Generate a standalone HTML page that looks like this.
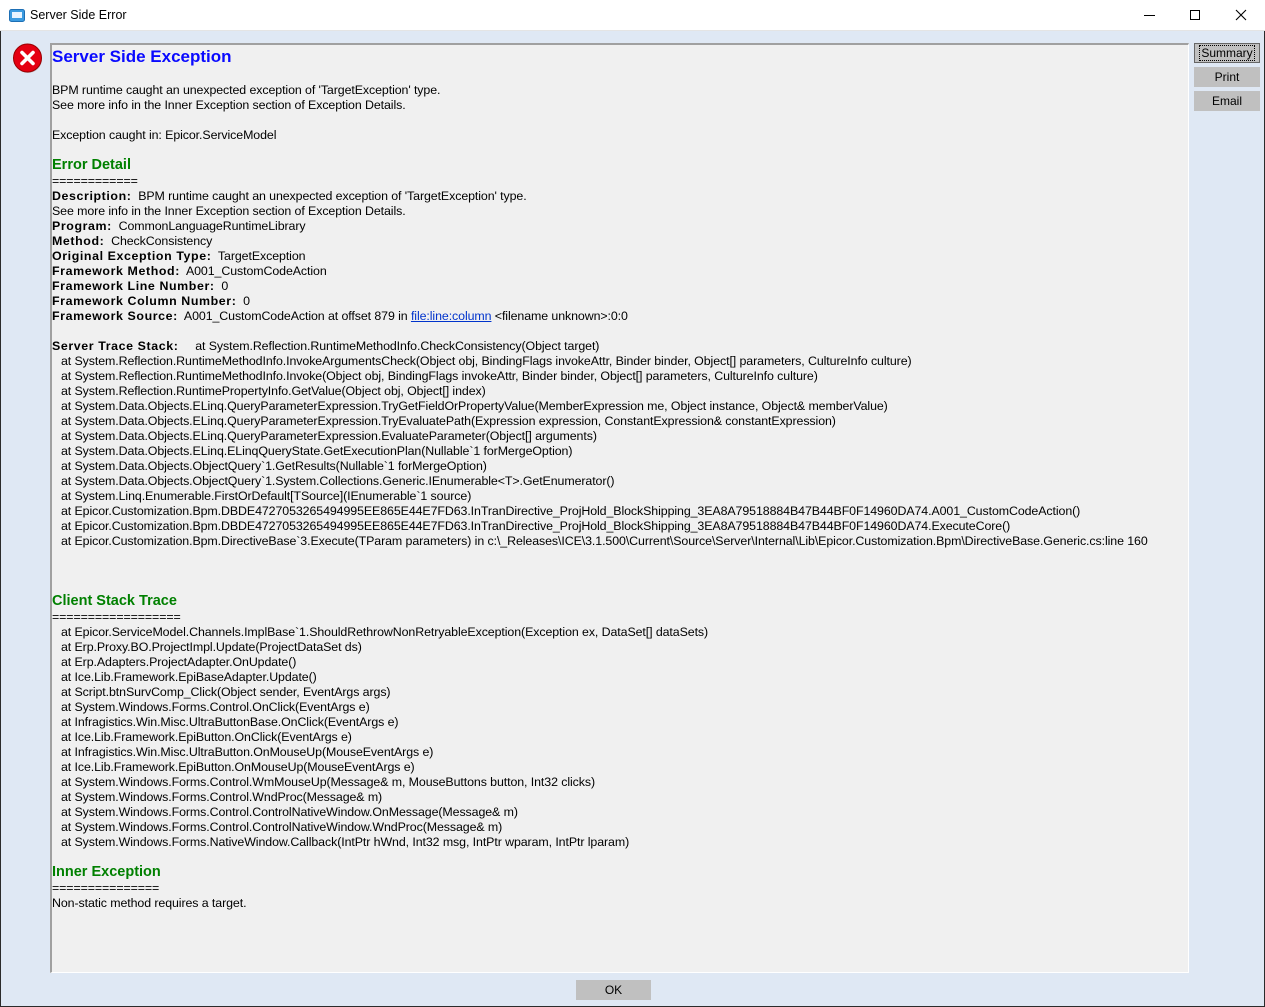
<!DOCTYPE html>
<html><head><meta charset="utf-8"><style>
*{margin:0;padding:0;box-sizing:border-box}
body{width:1265px;height:1007px;overflow:hidden;background:#dfe8f4;font-family:"Liberation Sans",Arial,sans-serif;position:relative}
.win{position:absolute;left:0;top:0;width:1265px;height:1007px;border:1px solid #2b2b2b;border-top:none}
.title{position:absolute;left:0;top:0;width:1265px;height:31px;background:#fff;border-bottom:1px solid #e4e4e4}
.title span{position:absolute;left:30px;top:8px;font-size:12.5px;color:#000}
.panel{position:absolute;left:50px;top:43px;width:1139px;height:930px;background:#f0f0f0;border-top:2px solid #a0a0a0;border-left:2px solid #a0a0a0;border-right:1px solid #fff;border-bottom:1px solid #fff}
.l{position:absolute;left:52px;height:15px;line-height:15px;font-size:12.4px;letter-spacing:-0.09px;color:#000;white-space:pre}
.i{left:61px}
.h{font-weight:bold;color:#008000;font-size:14.5px;line-height:17px;height:17px;letter-spacing:0}
b{font-weight:bold;letter-spacing:0.6px}
a{color:#0033cc;text-decoration:underline}
.btn{position:absolute;left:1194px;width:66px;height:20px;background:#c0c0c0;font-size:12px;text-align:center;line-height:20px;color:#000}
</style></head><body>
<div class="win"></div>
<div class="title">
<svg style="position:absolute;left:9px;top:9px" width="16" height="13" viewBox="0 0 16 13"><rect x="0.5" y="0.5" width="15" height="12" rx="2" fill="#3b9be0" stroke="#1d6fb5"/><rect x="3" y="3" width="10" height="6" fill="#e8f4ff"/></svg>
<span>Server Side Error</span>
<div style="position:absolute;left:1144px;top:15px;width:11px;height:1px;background:#000"></div>
<div style="position:absolute;left:1190px;top:10px;width:10px;height:10px;border:1px solid #000"></div>
<svg style="position:absolute;left:1235px;top:9px" width="12" height="12"><path d="M1 1L11 11M11 1L1 11" stroke="#000" stroke-width="1.1"/></svg>
</div>
<svg style="position:absolute;left:12px;top:42px" width="32" height="32" viewBox="0 0 32 32"><circle cx="16" cy="17" r="14" fill="#888" opacity=".5"/><circle cx="15.5" cy="16" r="14" fill="#e50012" stroke="#9a0000" stroke-width="1"/><path d="M10 10.5L21 21.5M21 10.5L10 21.5" stroke="#fff" stroke-width="3.6" stroke-linecap="round"/></svg>
<div class="panel"></div>
<div class="btn" style="top:43px;border:1px solid #666;line-height:18px"><span style="outline:1px dotted #000;padding:0 1px">Summary</span></div>
<div class="btn" style="top:67px">Print</div>
<div class="btn" style="top:91px">Email</div>
<div class="btn" style="left:576px;top:980px;width:75px;height:20px">OK</div>

<div class="l" style="top:46px;height:22px;line-height:22px;font-size:17px;font-weight:bold;color:#0a0aff;letter-spacing:0">Server Side Exception</div>
<div class="l" style="top:83px">BPM runtime caught an unexpected exception of 'TargetException' type.</div>
<div class="l" style="top:98px">See more info in the Inner Exception section of Exception Details.</div>
<div class="l" style="top:128px">Exception caught in: Epicor.ServiceModel</div>
<div class="l h" style="top:157px">Error Detail</div>
<div class="l" style="top:174px">============</div>
<div class="l" style="top:189px"><b>Description:</b>  BPM runtime caught an unexpected exception of 'TargetException' type.</div>
<div class="l" style="top:204px">See more info in the Inner Exception section of Exception Details.</div>
<div class="l" style="top:219px"><b>Program:</b>  CommonLanguageRuntimeLibrary</div>
<div class="l" style="top:234px"><b>Method:</b>  CheckConsistency</div>
<div class="l" style="top:249px"><b>Original Exception Type:</b>  TargetException</div>
<div class="l" style="top:264px"><b>Framework Method:</b>  A001_CustomCodeAction</div>
<div class="l" style="top:279px"><b>Framework Line Number:</b>  0</div>
<div class="l" style="top:294px"><b>Framework Column Number:</b>  0</div>
<div class="l" style="top:309px"><b>Framework Source:</b>  A001_CustomCodeAction at offset 879 in <a>file:line:column</a> &lt;filename unknown&gt;:0:0</div>
<div class="l" style="top:339px"><b>Server Trace Stack:</b>     at System.Reflection.RuntimeMethodInfo.CheckConsistency(Object target)</div>
<div class="l i" style="top:354px">at System.Reflection.RuntimeMethodInfo.InvokeArgumentsCheck(Object obj, BindingFlags invokeAttr, Binder binder, Object[] parameters, CultureInfo culture)</div>
<div class="l i" style="top:369px">at System.Reflection.RuntimeMethodInfo.Invoke(Object obj, BindingFlags invokeAttr, Binder binder, Object[] parameters, CultureInfo culture)</div>
<div class="l i" style="top:384px">at System.Reflection.RuntimePropertyInfo.GetValue(Object obj, Object[] index)</div>
<div class="l i" style="top:399px">at System.Data.Objects.ELinq.QueryParameterExpression.TryGetFieldOrPropertyValue(MemberExpression me, Object instance, Object&amp; memberValue)</div>
<div class="l i" style="top:414px">at System.Data.Objects.ELinq.QueryParameterExpression.TryEvaluatePath(Expression expression, ConstantExpression&amp; constantExpression)</div>
<div class="l i" style="top:429px">at System.Data.Objects.ELinq.QueryParameterExpression.EvaluateParameter(Object[] arguments)</div>
<div class="l i" style="top:444px">at System.Data.Objects.ELinq.ELinqQueryState.GetExecutionPlan(Nullable`1 forMergeOption)</div>
<div class="l i" style="top:459px">at System.Data.Objects.ObjectQuery`1.GetResults(Nullable`1 forMergeOption)</div>
<div class="l i" style="top:474px">at System.Data.Objects.ObjectQuery`1.System.Collections.Generic.IEnumerable&lt;T&gt;.GetEnumerator()</div>
<div class="l i" style="top:489px">at System.Linq.Enumerable.FirstOrDefault[TSource](IEnumerable`1 source)</div>
<div class="l i" style="top:504px">at Epicor.Customization.Bpm.DBDE4727053265494995EE865E44E7FD63.InTranDirective_ProjHold_BlockShipping_3EA8A79518884B47B44BF0F14960DA74.A001_CustomCodeAction()</div>
<div class="l i" style="top:519px">at Epicor.Customization.Bpm.DBDE4727053265494995EE865E44E7FD63.InTranDirective_ProjHold_BlockShipping_3EA8A79518884B47B44BF0F14960DA74.ExecuteCore()</div>
<div class="l i" style="top:534px">at Epicor.Customization.Bpm.DirectiveBase`3.Execute(TParam parameters) in c:\_Releases\ICE\3.1.500\Current\Source\Server\Internal\Lib\Epicor.Customization.Bpm\DirectiveBase.Generic.cs:line 160</div>
<div class="l h" style="top:593px">Client Stack Trace</div>
<div class="l" style="top:610px">==================</div>
<div class="l i" style="top:625px">at Epicor.ServiceModel.Channels.ImplBase`1.ShouldRethrowNonRetryableException(Exception ex, DataSet[] dataSets)</div>
<div class="l i" style="top:640px">at Erp.Proxy.BO.ProjectImpl.Update(ProjectDataSet ds)</div>
<div class="l i" style="top:655px">at Erp.Adapters.ProjectAdapter.OnUpdate()</div>
<div class="l i" style="top:670px">at Ice.Lib.Framework.EpiBaseAdapter.Update()</div>
<div class="l i" style="top:685px">at Script.btnSurvComp_Click(Object sender, EventArgs args)</div>
<div class="l i" style="top:700px">at System.Windows.Forms.Control.OnClick(EventArgs e)</div>
<div class="l i" style="top:715px">at Infragistics.Win.Misc.UltraButtonBase.OnClick(EventArgs e)</div>
<div class="l i" style="top:730px">at Ice.Lib.Framework.EpiButton.OnClick(EventArgs e)</div>
<div class="l i" style="top:745px">at Infragistics.Win.Misc.UltraButton.OnMouseUp(MouseEventArgs e)</div>
<div class="l i" style="top:760px">at Ice.Lib.Framework.EpiButton.OnMouseUp(MouseEventArgs e)</div>
<div class="l i" style="top:775px">at System.Windows.Forms.Control.WmMouseUp(Message&amp; m, MouseButtons button, Int32 clicks)</div>
<div class="l i" style="top:790px">at System.Windows.Forms.Control.WndProc(Message&amp; m)</div>
<div class="l i" style="top:805px">at System.Windows.Forms.Control.ControlNativeWindow.OnMessage(Message&amp; m)</div>
<div class="l i" style="top:820px">at System.Windows.Forms.Control.ControlNativeWindow.WndProc(Message&amp; m)</div>
<div class="l i" style="top:835px">at System.Windows.Forms.NativeWindow.Callback(IntPtr hWnd, Int32 msg, IntPtr wparam, IntPtr lparam)</div>
<div class="l h" style="top:864px">Inner Exception</div>
<div class="l" style="top:881px">===============</div>
<div class="l" style="top:896px">Non-static method requires a target.</div>
</body></html>
